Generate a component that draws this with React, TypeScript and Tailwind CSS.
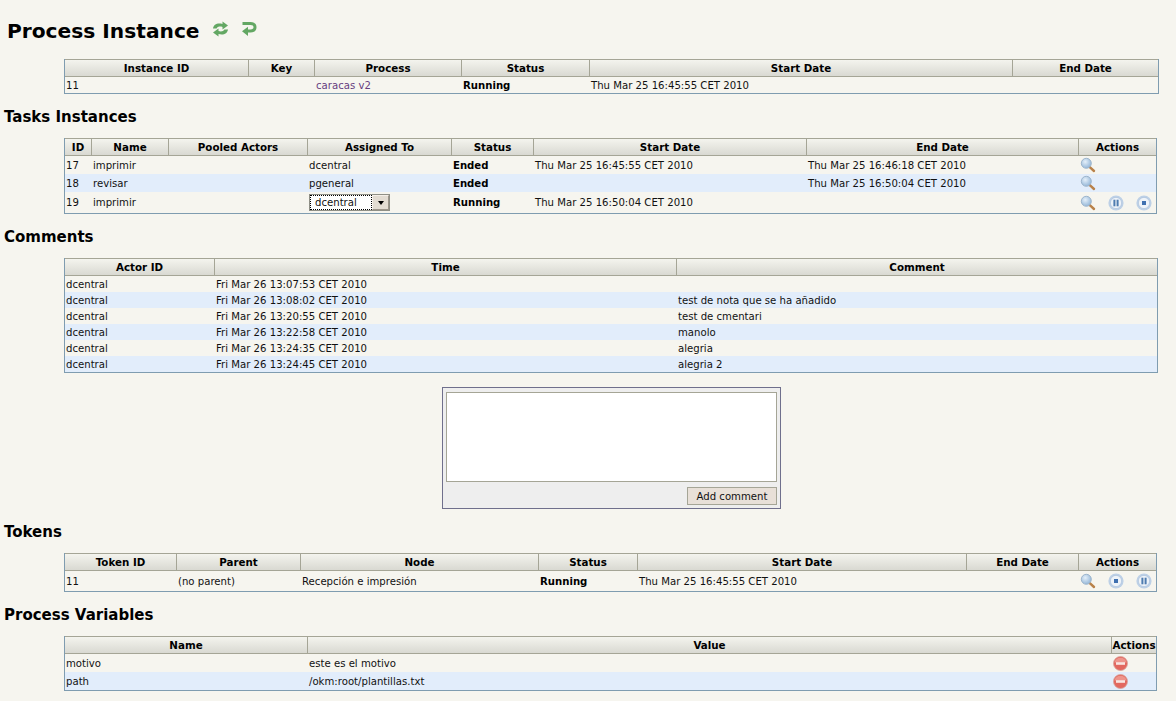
import type { ReactNode } from 'react';

function Magnifier() {
  return (
    <svg width="16" height="16" viewBox="0 0 16 16" className="block">
      <defs>
        <radialGradient id="lens" cx="40%" cy="35%" r="70%">
          <stop offset="0%" stopColor="#e4eff9" />
          <stop offset="100%" stopColor="#8fb3d6" />
        </radialGradient>
      </defs>
      <path d="M9.5 9.8 L14 14" stroke="#b9824a" strokeWidth="2.4" strokeLinecap="round" />
      <circle cx="6.3" cy="6.3" r="5" fill="url(#lens)" stroke="#9db5cc" strokeWidth="1" />
    </svg>
  );
}

function RoundButton({ kind }: { kind: 'pause' | 'stop' }) {
  return (
    <svg width="16" height="16" viewBox="0 0 16 16" className="block">
      <circle cx="8" cy="8" r="7.6" fill="#bdd0e6" />
      <circle cx="8" cy="8" r="5.6" fill="#eef3f9" stroke="#a9c0da" strokeWidth="0.6" />
      {kind === 'pause' ? (
        <g fill="#4f7cb0">
          <rect x="5.4" y="4.7" width="2" height="6.6" />
          <rect x="8.6" y="4.7" width="2" height="6.6" />
        </g>
      ) : (
        <rect x="6" y="6" width="4" height="4" fill="#3f70b0" />
      )}
    </svg>
  );
}

function DeleteIcon() {
  return (
    <svg width="15" height="15" viewBox="0 0 15 15" className="block">
      <circle cx="7.5" cy="7.5" r="7" fill="#e2685f" stroke="#d9a49c" strokeWidth="0.8" />
      <path d="M1.5 6.5 A6.2 6.2 0 0 1 13.5 6.5 Z" fill="#ee958c" />
      <rect x="3" y="6.2" width="9" height="2.6" fill="#f8e6e2" />
    </svg>
  );
}

function RefreshIcon() {
  return (
    <svg width="17" height="16" viewBox="0 0 17 16" className="block">
      <path d="M1 7.5 C1.5 3.5 5.5 1.5 10.5 3 L10.5 0.5 L16 4.5 L10.5 8.5 L10.5 6 C8 5.2 5.5 5.6 4.6 7.5 Z" fill="#63a763" />
      <path d="M16 8.5 C15.5 12.5 11.5 14.5 6.5 13 L6.5 15.5 L1 11.5 L6.5 7.5 L6.5 10 C9 10.8 11.5 10.4 12.4 8.5 Z" fill="#63a763" />
    </svg>
  );
}

function ReturnIcon() {
  return (
    <svg width="16" height="16" viewBox="0 0 16 16" className="block">
      <path d="M1.5 1 H9.5 C13.5 1 15.5 3.2 15.5 6.2 C15.5 9.4 13.5 11.4 9.5 11.4 H7 V15 L1 10.2 L7 5.8 V8.4 H9.5 C11.6 8.4 12.5 7.6 12.5 6.2 C12.5 4.9 11.6 4.1 9.5 4.1 H1.5 Z" fill="#63a763" />
    </svg>
  );
}

type Column = { title: string; width: number };

function DataTable({
  columns,
  rows,
  rowClass,
}: {
  columns: Column[];
  rows: ReactNode[][];
  rowClass: string;
}) {
  return (
    <div className="ml-[64px] w-[1093px]">
      <table className="w-full table-fixed border-separate border-spacing-0 border-x border-b border-[#7f9cb0] text-[10.15px] leading-[13px] text-[#111111]">
        <colgroup>
          {columns.map((c, i) => (
            <col key={i} style={{ width: c.width }} />
          ))}
        </colgroup>
        <thead>
          <tr>
            {columns.map((c, i) => (
              <th
                key={i}
                className="h-[18px] border-y border-r border-[#a5a596] bg-gradient-to-b from-[#f4f4ee] to-[#d9d9d2] p-0 text-center text-[10.3px] font-bold whitespace-nowrap text-black last:border-r-0"
              >
                {c.title}
              </th>
            ))}
          </tr>
        </thead>
        <tbody>
          {rows.map((row, i) => (
            <tr key={i} className={`${rowClass} ${i % 2 === 1 ? 'bg-[#e2edfb]' : ''}`}>
              {row.map((cell, j) => (
                <td key={j} className="overflow-visible px-[1px] py-0 align-middle whitespace-nowrap">
                  {cell}
                </td>
              ))}
            </tr>
          ))}
        </tbody>
      </table>
    </div>
  );
}

function SectionTitle({ children }: { children: ReactNode }) {
  return (
    <h2 className="flex h-[44px] items-center pt-[2px] pl-1 text-[15px] leading-none font-bold text-black">{children}</h2>
  );
}

const b = (s: string) => <b className="font-bold text-black">{s}</b>;

function Actions({ children }: { children: ReactNode }) {
  return <div className="flex items-center">{children}</div>;
}

const taskColumns = [
  { title: 'ID', width: 27 },
  { title: 'Name', width: 77 },
  { title: 'Pooled Actors', width: 139 },
  { title: 'Assigned To', width: 144 },
  { title: 'Status', width: 82 },
  { title: 'Start Date', width: 273 },
  { title: 'End Date', width: 272 },
  { title: 'Actions', width: 77 },
];

const commentRows = [
  ['Fri Mar 26 13:07:53 CET 2010', ''],
  ['Fri Mar 26 13:08:02 CET 2010', 'test de nota que se ha añadido'],
  ['Fri Mar 26 13:20:55 CET 2010', 'test de cmentari'],
  ['Fri Mar 26 13:22:58 CET 2010', 'manolo'],
  ['Fri Mar 26 13:24:35 CET 2010', 'alegria'],
  ['Fri Mar 26 13:24:45 CET 2010', 'alegria 2'],
];

export default function App() {
  return (
    <div className="h-[701px] overflow-hidden bg-[#f6f5ef] font-['DejaVu_Sans','Liberation_Sans',sans-serif]">
      <div className="flex h-[59px] items-center pt-[3px] pl-[7px]">
        <h1 className="text-[20.2px] leading-none font-bold text-black">Process Instance</h1>
        <div className="mb-[5px] ml-[12px] flex gap-[12px]">
          <RefreshIcon />
          <ReturnIcon />
        </div>
      </div>

      <DataTable
        rowClass="h-[16px]"
        columns={[
          { title: 'Instance ID', width: 184 },
          { title: 'Key', width: 66 },
          { title: 'Process', width: 147 },
          { title: 'Status', width: 128 },
          { title: 'Start Date', width: 423 },
          { title: 'End Date', width: 145 },
        ]}
        rows={[
          ['11', '', <span className="text-[#663d80]">caracas v2</span>, b('Running'), 'Thu Mar 25 16:45:55 CET 2010', ''],
        ]}
      />

      <SectionTitle>Tasks Instances</SectionTitle>
      <DataTable
        rowClass="h-[18px] [&:last-child]:h-[21px]"
        columns={taskColumns}
        rows={[
          ['17', 'imprimir', '', 'dcentral', b('Ended'), 'Thu Mar 25 16:45:55 CET 2010', 'Thu Mar 25 16:46:18 CET 2010', <Actions><Magnifier /></Actions>],
          ['18', 'revisar', '', 'pgeneral', b('Ended'), '', 'Thu Mar 25 16:50:04 CET 2010', <Actions><Magnifier /></Actions>],
          [
            '19',
            'imprimir',
            '',
            <div className="flex h-[17px] w-[81px] border border-[#8f8f86] bg-white">
              <span className="flex-1 border border-dotted border-black pl-[4px] leading-[13px]">dcentral</span>
              <span className="flex w-[17px] items-center justify-center border border-t-[#f4efe8] border-r-[#9c958a] border-b-[#9c958a] border-l-[#f4efe8] bg-[#e3dcd2]">
                <span className="h-0 w-0 border-x-[3px] border-t-[4px] border-x-transparent border-t-black" />
              </span>
            </div>,
            b('Running'),
            'Thu Mar 25 16:50:04 CET 2010',
            '',
            <Actions>
              <Magnifier />
              <div className="ml-[12px]"><RoundButton kind="pause" /></div>
              <div className="ml-[12px]"><RoundButton kind="stop" /></div>
            </Actions>,
          ],
        ]}
      />

      <SectionTitle>Comments</SectionTitle>
      <DataTable
        rowClass="h-[16px]"
        columns={[
          { title: 'Actor ID', width: 150 },
          { title: 'Time', width: 462 },
          { title: 'Comment', width: 480 },
        ]}
        rows={commentRows.map(([time, comment]) => ['dcentral', time, comment])}
      />

      <div className="mt-[14px] ml-[442px] h-[122px] w-[339px] border border-[#6f6f8c] bg-[#eeeeee] px-[3px] pt-[4px]">
        <textarea className="block h-[90px] w-[331px] resize-none border border-[#a5a596] bg-white" />
        <div className="mt-[5px] flex justify-end">
          <button className="h-[18px] w-[90px] border border-[#a5a596] bg-[#e8e0d8] pt-[2px] text-[10.15px] leading-none text-[#111111]">
            Add comment
          </button>
        </div>
      </div>

      <SectionTitle>Tokens</SectionTitle>
      <DataTable
        rowClass="h-[20px]"
        columns={[
          { title: 'Token ID', width: 112 },
          { title: 'Parent', width: 124 },
          { title: 'Node', width: 238 },
          { title: 'Status', width: 99 },
          { title: 'Start Date', width: 329 },
          { title: 'End Date', width: 112 },
          { title: 'Actions', width: 77 },
        ]}
        rows={[
          [
            '11',
            '(no parent)',
            'Recepción e impresión',
            b('Running'),
            'Thu Mar 25 16:45:55 CET 2010',
            '',
            <Actions>
              <Magnifier />
              <div className="ml-[12px]"><RoundButton kind="stop" /></div>
              <div className="ml-[12px]"><RoundButton kind="pause" /></div>
            </Actions>,
          ],
        ]}
      />

      <SectionTitle>Process Variables</SectionTitle>
      <DataTable
        rowClass="h-[18px]"
        columns={[
          { title: 'Name', width: 243 },
          { title: 'Value', width: 804 },
          { title: 'Actions', width: 44 },
        ]}
        rows={[
          ['motivo', 'este es el motivo', <DeleteIcon />],
          ['path', '/okm:root/plantillas.txt', <DeleteIcon />],
        ]}
      />
    </div>
  );
}
